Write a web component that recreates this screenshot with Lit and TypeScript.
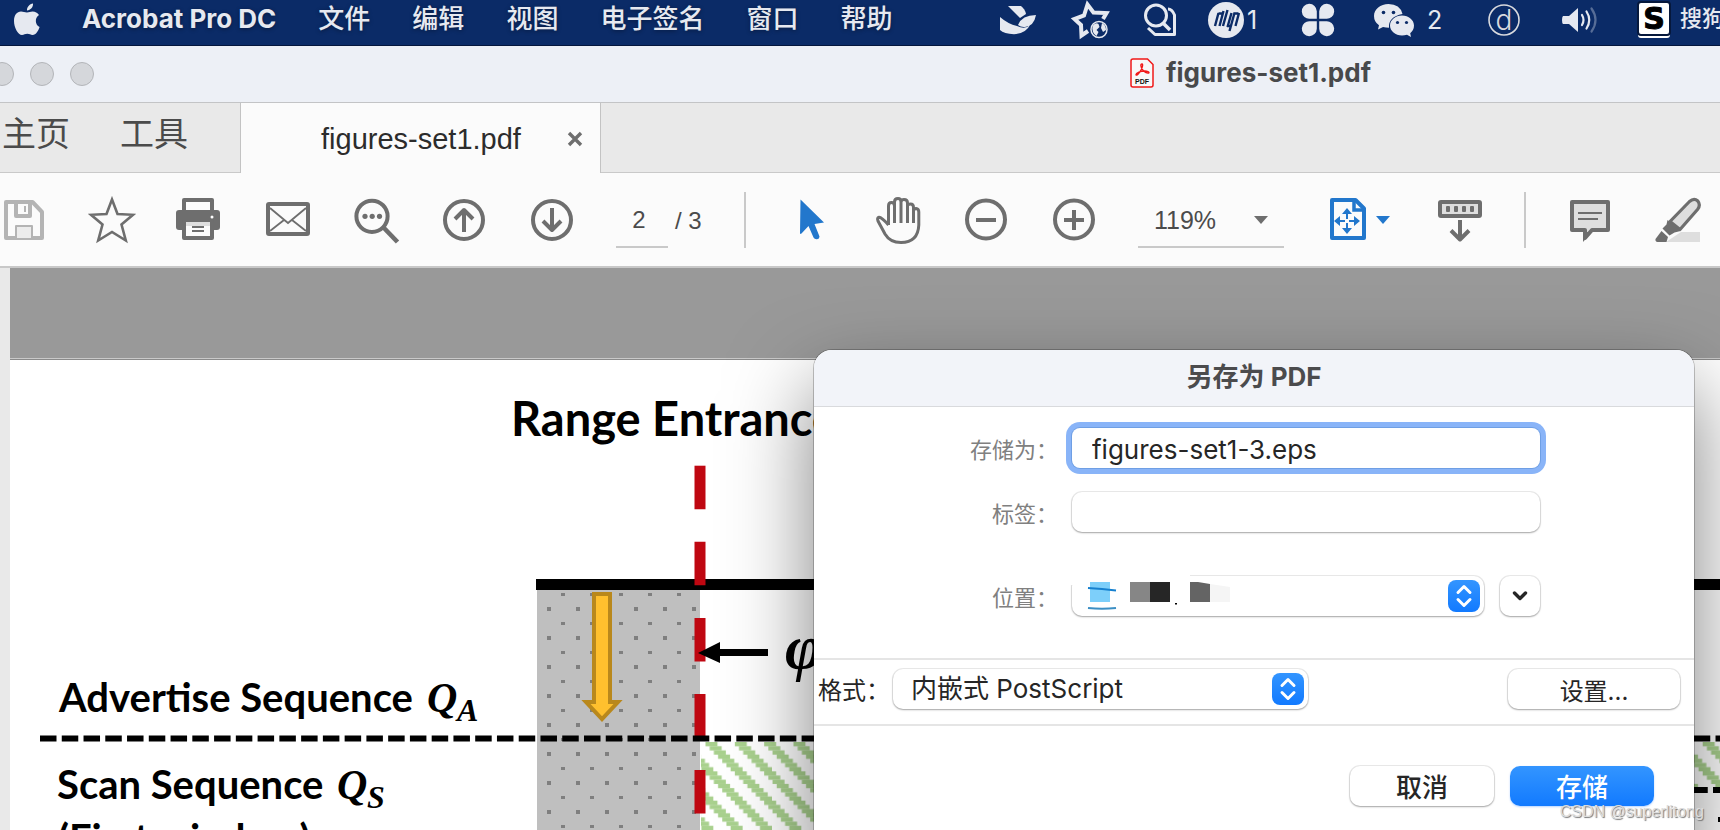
import { LitElement, html, svg, css } from "lit";
import { customElement, state } from "lit/decorators.js";

const toolIcons: Record<string, unknown> = {
  save: svg`<g fill="none" stroke="#b4b4b4" stroke-width="4" stroke-linejoin="round"><path d="M6 6h26.500l9.500 10v26H6z"/><path d="M16 6v14h14V6"/><path d="M16 42V30h16v12" fill="#ececec" stroke-width="2"/><path d="M25 10v6" stroke-width="2"/></g>`,
  star: svg`<path d="M24 3.500L29.500 18L45 18.800L33.500 28.500L37.800 44.500L24 36L10.200 44.500L14.500 28.500L3 18.800L18.500 18z" fill="none" stroke="#6e6e6e" stroke-width="2.600" stroke-linejoin="miter"/>`,
  print: svg`<path d="M8 15V4h28v11" fill="none" stroke="#6e6e6e" stroke-width="4" stroke-linejoin="round"/><path d="M3 14h38a3 3 0 0 1 3 3v14a3 3 0 0 1-3 3H3a3 3 0 0 1-3-3V17a3 3 0 0 1 3-3z" fill="#6e6e6e"/><path d="M8 26h28v16H8z" fill="#fbfbfb" stroke="#6e6e6e" stroke-width="4" stroke-linejoin="round"/><path d="M10 26h24v4H10z" fill="#dedede"/><path d="M16 31h12M16 35h12" stroke="#6e6e6e" stroke-width="2"/><circle cx="36" cy="21" r="1.500" fill="#fff"/>`,
  mail: svg`<rect x="4" y="8" width="40" height="30" rx="1" fill="none" stroke="#6e6e6e" stroke-width="4"/><path d="M6 12l18 15 18-15M6 35l14-11M42 35L28 24" fill="none" stroke="#6e6e6e" stroke-width="1.800"/>`,
  find: svg`<circle cx="20" cy="20.300" r="15.600" fill="none" stroke="#6e6e6e" stroke-width="4"/><path d="M32 32l13.500 14" stroke="#6e6e6e" stroke-width="4.600"/><g fill="#6e6e6e"><circle cx="13" cy="20.300" r="2.600"/><circle cx="20.200" cy="20.300" r="2.600"/><circle cx="27.500" cy="20.300" r="2.600"/></g>`,
  up: svg`<g fill="none" stroke="#6e6e6e" stroke-width="4"><circle cx="24" cy="24" r="19"/><path d="M24 36V15M15 23l9-9 9 9" stroke-linejoin="round"/></g>`,
  down: svg`<g fill="none" stroke="#6e6e6e" stroke-width="4"><circle cx="24" cy="24" r="19"/><path d="M24 12v21M15 25l9 9 9-9" stroke-linejoin="round"/></g>`,
  select: svg`<path d="M14.500 3.500L38 26.500L28.500 28L33.500 40.500Q33.500 43 31 43.300Q28.500 43.500 27.500 41.500L22.500 30L15.500 37.500Q14 38.500 14 37z" fill="#2277cc"/>`,
  hand: svg`<path d="M14.500 29V10Q14.500 6.500 17.500 6.500Q20.500 6.500 20.500 10M20.500 27V6Q20.500 2.500 24 2.500Q27 2.500 27 6V27M27 6Q27.500 3.500 30 3.500Q33.500 3.500 33.500 7V27M33.500 10Q34 8 36.500 8Q39.500 8 39.500 11.500V27M39.500 15Q40 12.500 42 12.500Q44.800 12.800 44.800 16V29Q44 46.500 27 46.500Q16 46.500 11 38L4 25Q2.800 21.800 5 21.300Q8 21.500 14.500 29" fill="none" stroke="#6e6e6e" stroke-width="3" stroke-linejoin="round"/>`,
  minus: svg`<g fill="none" stroke="#6e6e6e" stroke-width="4"><circle cx="24" cy="23.500" r="19"/><path d="M14 24h20"/></g>`,
  plus: svg`<g fill="none" stroke="#6e6e6e" stroke-width="4"><circle cx="24" cy="23.500" r="19"/><path d="M14 24h20M24 14v20"/></g>`,
  fit: svg`<path d="M8 4h23.500l8.500 8.500V42H8z" fill="none" stroke="#2277cc" stroke-width="4" stroke-linejoin="round"/><path d="M30 4v10h10" fill="none" stroke="#2277cc" stroke-width="3.500"/><g fill="#2277cc"><path d="M23 12l5 6H18zM23 38l5-6H18zM10 25l6-5v10zM36 25l-6-5v10z"/><path d="M22 17h2v6h-2zM22 27h2v6h-2zM15 24h6v2h-6zM25 24h6v2h-6z"/></g>`,
  scroll: svg`<rect x="4" y="6" width="40" height="14" rx="1" fill="#dedede" stroke="#6e6e6e" stroke-width="4"/><g fill="#6e6e6e"><rect x="10" y="10" width="4" height="6" rx="1"/><rect x="18" y="10" width="4" height="6" rx="1"/><rect x="26" y="10" width="4" height="6" rx="1"/><rect x="34" y="10" width="4" height="6" rx="1"/></g><path d="M24 24v19M15 34.500l9 9 9-9" fill="none" stroke="#6e6e6e" stroke-width="4" stroke-linejoin="round"/>`,
  comment: svg`<path d="M6 6h36v28H26l-7 8v-8H6z" fill="#dedede" stroke="#6e6e6e" stroke-width="4" stroke-linejoin="round"/><path d="M17 36v10l9-10z" fill="#6e6e6e"/><path d="M12 17h24M12 23h20" stroke="#6e6e6e" stroke-width="2"/>`,
  highlight: svg`<path d="M12 46L27 36h19v10z" fill="#dedede"/><path d="M16 25.500L35.500 5.500Q40 1.500 43.800 5Q47 9 43.500 13.500L26 33.500z" fill="#dedede" stroke="#6e6e6e" stroke-width="3.200" stroke-linejoin="round"/><path d="M13.500 24l13 11-6 1.500-5 3-7-7 4-4z" fill="#6e6e6e"/><path d="M7.500 35l6.500 6-1.500 5H3.500Q1 45.500 1.500 43z" fill="#6e6e6e"/>`,
};

const statusIcons: Record<string, unknown> = {
  bird: svg`<path d="M8 4h13q4 3 5 8l-6 4Q14 10 8 4z"/><path d="M18 23Q22 13 36 13Q34 24 25 25Q21 25.500 18 23z"/><path d="M0 15Q8 22 17 24q8 4 13-1Q26 31.500 14 32.200Q4 32 0 28z"/>`,
  star: svg`<path d="M31 17L34.500 11L21.500 10.500L15.500 2.500L12 13.500L2.500 17L9 23L9.500 33.500L16 29" fill="none" stroke="#e6e9f0" stroke-width="4" stroke-linejoin="miter"/><circle cx="27" cy="27.500" r="8" fill="none" stroke="#e6e9f0" stroke-width="1.500"/><path d="M20.500 24q3-4 6-2l1 3-3 3 2 2-2 4q-5-3-4-10zM30 21q4 2 4 7l-3 2-2-4z"/>`,
  search: svg`<g fill="none" stroke="#e6e9f0" stroke-width="3"><circle cx="12" cy="13.500" r="10.500"/><path d="M19 21l7 7" stroke-width="3.500"/><path d="M24 7q4 0 6.500 6v19.500H11L4 26" stroke-linejoin="round"/></g>`,
  hp: svg`<circle cx="18" cy="18" r="18"/><g stroke="#0b2b67" stroke-width="2.400" fill="none"><path d="M10.500 11L7 24M15.500 9L11.500 24M10.500 11.500h4M19.500 8l-4.500 16M23.500 11l-4 14M26.500 11l-5 18M31 11l-3.500 13M25.500 11.500h5M19 24h4"/></g>`,
  clover: svg`<path d="M14.800 16.800H8a7.500 7.500 0 1 1 6.800-7.500zM17.200 16.800H24a7.500 7.500 0 1 0-6.800-7.500zM14.800 19.200H8a7.500 7.500 0 1 0 6.800 7.500zM17.200 19.200H24a7.500 7.500 0 1 1-6.800 7.500z"/>`,
  wechat: svg`<path d="M14.500 2C6.500 2 0 7.300 0 14q0 6 5 9.300L4 27.500l5-2.500q3 .8 6 .8Q14 15 28.500 12Q26 2 14.500 2z"/><path d="M28 13.500c-6.600 0-12 4.500-12 10s5.400 10 12 10q2.500 0 5-.8l4 2.300-.8-3.700Q40 28 40 23.500c0-5.500-5.400-10-12-10z"/><g fill="#0b2b67"><circle cx="9.500" cy="10.500" r="1.800"/><circle cx="19.500" cy="10.500" r="1.800"/><circle cx="23.500" cy="20.500" r="1.600"/><circle cx="32.500" cy="20.500" r="1.600"/></g>`,
  disc: svg`<circle cx="16" cy="18" r="15" fill="none" stroke="#d9dade" stroke-width="1.600"/><text class="disc-letter" x="16" y="28" text-anchor="middle">d</text>`,
  volume: svg`<path d="M1 14h6l9-8v24l-9-8H1q-1-1-1-4t1-4z"/><g fill="none" stroke="#e6e9f0" stroke-width="2.200" stroke-linecap="round"><path d="M20 13q3 5 0 10"/><path d="M24.500 9.500q5.500 8.500 0 17"/><path d="M29.500 6.500q8 11.500 0 23" opacity=".35"/></g>`,
  sogou: svg`<rect x="0" y="2" width="32" height="34" rx="3" fill="#fff"/><rect x="0" y="0" width="32" height="33" rx="3" fill="#fff" stroke="#06183c" stroke-width="2"/><text class="sogou-letter" x="16" y="27" text-anchor="middle">S</text>`,
};

const statusItems = [
  { icon: "bird", w: 36 },
  { icon: "star", w: 36 },
  { icon: "search", w: 36 },
  { icon: "hp", w: 36, text: "1" },
  { icon: "clover", w: 32 },
  { icon: "wechat", w: 40, text: "2", wide: true },
  { icon: "disc", w: 32 },
  { icon: "volume", w: 36 },
  { icon: "sogou", w: 32 },
];

@customElement("tool-icon")
class ToolIcon extends LitElement {
  static properties = { name: {} };
  declare name: string;
  static styles = css`
    :host { display: block; }
    svg { display: block; width: 48px; height: 48px; }
  `;
  render() {
    return html`<svg viewBox="0 0 48 48" aria-hidden="true">${toolIcons[this.name]}</svg>`;
  }
}

@customElement("menu-bar")
class MenuBar extends LitElement {
  static styles = css`
    :host {
      display: flex; justify-content: space-between; align-items: flex-start; flex: none;
      box-sizing: border-box; height: 46px; overflow: hidden; padding-left: 14px;
      background: #0b2b67; border-bottom: 1px solid #04163d; color: #e6e9f0;
      font-family: Inter, "Noto Sans CJK SC", sans-serif; font-size: 25px;
    }
    nav { display: flex; align-items: center; gap: 42px; height: 38px; }
    a { color: inherit; text-decoration: none; white-space: nowrap; font-size: 26px; font-weight: 500; line-height: 38px; text-shadow: 0 1px 4px #0006; }
    a.app { font-weight: 700; }
    .apple { width: 26px; height: 34px; fill: #e6e9f0; display: block; }
    .status {
      display: grid; align-items: center; height: 40px; margin-right: -4px;
      grid-template-columns: 72px 72px 64px 94px 72px 114px 74px 76px 42px auto;
    }
    .item { display: flex; align-items: center; gap: 3px; }
    .item.wide { gap: 13px; }
    .item svg { display: block; height: 36px; fill: #e6e9f0; overflow: visible; }
    .ime { font-size: 22px; font-weight: 500; line-height: 32px; padding-bottom: 4px; }
    .disc-letter { font: 300 28px Inter, sans-serif; fill: #d9dade; }
    .sogou-letter { font: 700 30px "DejaVu Sans", sans-serif; fill: #000; stroke: #000; stroke-width: 1; }
  `;
  render() {
    const menus = ["文件", "编辑", "视图", "电子签名", "窗口", "帮助"];
    return html`
      <nav>
        <svg class="apple" viewBox="0 0 26 34"><path d="M13 10.500C10.500 10.500 9.500 9.500 7 9.500C3 9.500 0 13 0 19C0 25.500 4 33 8 33C10 33 11 31.800 13.300 31.800C15.600 31.800 16.500 33 18.600 33C22 33 24.500 28.500 25.600 25C21 23 20.500 15.500 25 13C23.500 10.800 21.300 9.500 18.600 9.500C16.300 9.500 15 10.500 13 10.500zM13 8.500C12.800 5 15.500 2 19 1.500C19.400 5 16.500 8.300 13 8.500z"/></svg>
        <a class="app" href="#app">Acrobat Pro DC</a>
        ${menus.map((m) => html`<a href="#menu">${m}</a>`)}
      </nav>
      <div class="status">
        ${statusItems.map((s) => html`<span class="item ${s.wide ? "wide" : ""}">
          <svg width=${s.w} height="36" viewBox="0 0 ${s.w} 36">${statusIcons[s.icon]}</svg>${s.text ?? ""}</span>`)}
        <span class="ime">搜狗</span>
      </div>`;
  }
}

@customElement("figure-page")
class FigurePage extends LitElement {
  static styles = css`
    :host { display: flex; flex: 1; min-height: 0; background: #fff; border-top: 1px solid #c9c9c9; overflow: hidden; }
    svg { display: block; flex: 1; width: 100%; border-top: 1px solid #8a8a8a; }
    .label { font: 700 40px Lato, sans-serif; }
    .heading { font: 700 47px Lato, sans-serif; }
    .math { font: italic 700 42px "Liberation Serif", serif; }
    .sub { font: italic 700 32px "Liberation Serif", serif; }
    .phi { font: italic 700 64px "Liberation Serif", serif; }
  `;
  render() {
    const steps = [0, 1, 2, 3, 4, 5, 6];
    const s = 29.33 / 7;
    return html`<svg role="img" aria-label="Sequence timing figure">
      <defs>
        <pattern id="dots" patternUnits="userSpaceOnUse" x="537" y="590" width="29" height="29">
          <rect width="29" height="29" fill="#bfbfbf"/>
          <rect x="24" y="3" width="4" height="3" fill="#7f7f7f"/>
          <rect x="10" y="17" width="4" height="4" fill="#7f7f7f"/>
        </pattern>
        <pattern id="hatch" patternUnits="userSpaceOnUse" x="705.500" y="742" width="29.330" height="29.330">
          ${steps.map((k) => svg`<rect x=${k * s} y=${k * s} width="12" height=${s + 0.1} fill="#a9d18e"/>
            <rect x=${k * s - 29.33} y=${k * s} width="12" height=${s + 0.1} fill="#a9d18e"/>`)}
        </pattern>
      </defs>
      <g transform="translate(-10 -360)">
        <rect x="537" y="590" width="163" height="400" fill="url(#dots)"/>
        <rect x="701" y="742" width="900" height="300" fill="url(#hatch)"/>
        <rect x="1600" y="742" width="900" height="48" fill="url(#hatch)"/>
        <path d="M536 584.500H2400" stroke="#000" stroke-width="11"/>
        <path d="M700 465.700V990" stroke="#bf0711" stroke-width="11" stroke-dasharray="43.500 32.600"/>
        <path d="M40 738.500H2400" stroke="#000" stroke-width="6" stroke-dasharray="16.500 5.260"/>
        <path d="M1625.960 790H2400" stroke="#000" stroke-width="6" stroke-dasharray="16.500 5.260"/>
        <path d="M594 594h16v108h8l-16 17-16-17h8z" fill="#ffc02e" stroke="#b9881c" stroke-width="4"/>
        <path d="M698 653l22-11v7h48v7h-48v7z" fill="#000"/>
        <rect x="1718" y="817" width="4" height="5"/>
        <text class="heading" x="511" y="436">Range Entrance</text>
        <text class="label" x="59" y="712">Advertise Sequence</text>
        <text class="math" x="427" y="712">Q</text>
        <text class="sub" x="457" y="721">A</text>
        <text class="label" x="57" y="799">Scan Sequence</text>
        <text class="math" x="337" y="799">Q</text>
        <text class="sub" x="367" y="808">S</text>
        <text class="label" x="58" y="853">(First window)</text>
        <text class="phi" x="785" y="668">φ</text>
      </g>
    </svg>`;
  }
}

@customElement("save-dialog")
class SaveDialog extends LitElement {
  @state() private fileName = "figures-set1-3.eps";
  static styles = css`
    :host {
      display: flex; flex-direction: column; overflow: hidden; background: #fff; color: #262626;
      border-radius: 18px; font-family: Inter, "Noto Sans CJK SC", sans-serif; font-size: 26px;
    }
    h2 {
      margin: 0; height: 56px; line-height: 54px; text-align: center; font-size: 26px; font-weight: 700;
      color: #4b4b4d; background: #f2f4f9; border-bottom: 1px solid #d9dadd;
    }
    .fields {
      display: grid; grid-template-columns: 244px minmax(0, 1fr); column-gap: 14px; row-gap: 24px;
      padding: 21px 154px 42px 0; align-items: start; border-bottom: 2px solid #e5e5e5;
    }
    .fields label { font-size: 22px; line-height: 36px; padding-top: 4px; color: #808080; text-align: right; }
    .fields .last { margin-top: 20px; }
    input, select, button {
      box-sizing: border-box; height: 40px; margin: 0; font: inherit; color: inherit; background: #fff;
      border: 0; border-radius: 10px; outline: 0; appearance: none;
      box-shadow: 0 0 0 1px #00000014, 0 1px 2px #0000004d;
    }
    input { width: 100%; padding: 2px 20px 0; }
    .name { border-radius: 8px; box-shadow: 0 0 0 1px #6f9fe4, 0 0 0 6px #89b4f8; }
    .place { display: flex; gap: 16px; height: 40px; }
    .popup { display: grid; flex: 1; align-items: center; }
    .popup > * { grid-area: 1 / 1; }
    .popup select { width: 100%; padding: 0 40px 0 18px; }
    .popup .step { justify-self: end; margin-right: 4px; }
    .popup svg { display: block; pointer-events: none; }
    .smudge { align-self: start; margin: -3px 0 0 -4px; }
    .more { width: 40px; padding: 0; display: grid; place-items: center; }
    .format { display: flex; align-items: center; padding: 9px 14px 15px 4px; border-bottom: 2px solid #e5e5e5; }
    .format label { font-size: 24px; line-height: 36px; padding-top: 4px; width: 75px; white-space: nowrap; }
    .format .popup { flex: 0 0 415px; }
    .format select { padding-bottom: 2px; }
    .settings { margin-left: auto; width: 172px; font-size: 24px; }
    .actions { display: flex; justify-content: flex-end; gap: 16px; padding: 40px 40px 60px; }
    .actions button { width: 144px; font-weight: 500; padding: 0 0 2px; }
    .actions .primary { color: #fff; background: linear-gradient(#3395ff, #127aff); box-shadow: 0 1px 2px #0a6cff4d; }
  `;
  private stepper() {
    return html`<svg class="step" width="32" height="32" viewBox="0 0 32 32" aria-hidden="true">
      <defs><linearGradient id="g" x2="0" y2="1"><stop stop-color="#3395ff"/><stop offset="1" stop-color="#127aff"/></linearGradient></defs>
      <rect width="32" height="32" rx="8" fill="url(#g)"/>
      <path d="M10 12.500l6-6 6 6M10 19.500l6 6 6-6" fill="none" stroke="#fff" stroke-width="3" stroke-linecap="round" stroke-linejoin="round"/></svg>`;
  }
  render() {
    return html`
      <h2>另存为 PDF</h2>
      <div class="fields">
        <label for="name">存储为：</label>
        <input id="name" class="name" .value=${this.fileName}
          @input=${(e: InputEvent) => (this.fileName = (e.target as HTMLInputElement).value)} />
        <label for="tags">标签：</label>
        <input id="tags" />
        <label class="last" for="where">位置：</label>
        <div class="place last">
          <div class="popup">
            <select id="where"><option></option></select>
            <svg class="smudge" width="170" height="42" viewBox="0 0 170 42" aria-hidden="true">
              <path d="M0 0h122v12H0z" fill="#fff"/>
              <path d="M22 9h20v20H22z" fill="#7dcffa"/><path d="M20 15l14 1 14 1.500" fill="none" stroke="#1580cf" stroke-width="2"/>
              <path d="M20 35q14 1.500 28 0" fill="none" stroke="#3c8fc4" stroke-width="2"/>
              <path d="M62 9h20v20H62z" fill="#868686"/><path d="M82 9h20v20H82z" fill="#262626"/>
              <path d="M107 30h2v1.500h-2z" fill="#000"/>
              <path d="M122 9h8l12 2v18h-20z" fill="#646464"/><path d="M142 11l20 3v15h-20z" fill="#f5f5f5"/>
            </svg>
            ${this.stepper()}
          </div>
          <button class="more" aria-label="展开">
            <svg width="16" height="12" viewBox="0 0 16 12"><path d="M2.500 3l5.500 5.500L13.500 3" fill="none" stroke="#262626" stroke-width="3.400" stroke-linecap="round" stroke-linejoin="round"/></svg>
          </button>
        </div>
      </div>
      <div class="format">
        <label for="format">格式：</label>
        <div class="popup">
          <select id="format"><option>内嵌式 PostScript</option></select>
          ${this.stepper()}
        </div>
        <button class="settings">设置...</button>
      </div>
      <div class="actions"><button>取消</button><button class="primary">存储</button></div>`;
  }
}

@customElement("app-root")
class AppRoot extends LitElement {
  static styles = css`
    :host {
      display: flex; flex-direction: column; position: relative; height: 100vh; overflow: hidden;
      background: #e9e9e9; color: #4b4b4b; font-family: Inter, "Noto Sans CJK SC", sans-serif;
    }
    .title { display: flex; align-items: center; flex: none; box-sizing: border-box; height: 57px; background: #edf0f6; border-bottom: 1px solid #c3c4c6; }
    .lights { display: flex; gap: 16px; margin-left: -10px; flex: 0 0 1140px; }
    .lights i { box-sizing: border-box; width: 24px; height: 24px; border-radius: 50%; background: #d5d7db; border: 1px solid #b3b5b9; }
    h1 { display: flex; align-items: center; gap: 12px; margin: 0; padding-bottom: 2px; font-size: 26px; line-height: 32px; font-weight: 700; color: #48494b; white-space: nowrap; }
    h1 svg { display: block; }
    .pdf-text { font: 700 7px "Liberation Sans", sans-serif; fill: #111; }
    .tabs { display: flex; flex: none; height: 70px; }
    .side { display: flex; align-items: center; gap: 50px; flex: 0 0 238px; padding: 0 0 8px 2px; box-sizing: content-box; border-bottom: 1px solid #c9c9c9; }
    .side a { font-size: 34px; line-height: 58px; color: #4b4b4b; text-decoration: none; white-space: nowrap; }
    .tab {
      display: flex; align-items: center; justify-content: space-between; flex: none; box-sizing: border-box; width: 361px;
      padding: 2px 17px 0 80px; background: #fbfbfb; border: 1px solid #c3c3c3; border-width: 0 1px;
      font-family: "Liberation Sans", sans-serif; font-size: 29px; color: #2c2c2c;
    }
    .rest { flex: 1; border-bottom: 1px solid #c9c9c9; }
    .close { border: 0; padding: 0; background: none; }
    .close svg { display: block; }
    .tools { display: flex; align-items: center; gap: 40px; flex: none; height: 93px; background: #fbfbfb; border-bottom: 2px solid #c8c8c8; font-family: "Liberation Sans", sans-serif; font-size: 24px; }
    .tools button { flex: none; border: 0; padding: 0; background: none; display: flex; align-items: center; gap: 4px; }
    .divider { flex: none; width: 2px; height: 56px; background: #c9c9c9; }
    .pages { display: flex; align-items: center; gap: 7px; flex: 0 0 88px; white-space: nowrap; }
    .pages span { padding-top: 2px; }
    .pages input, .zoom select {
      box-sizing: border-box; height: 56px; margin: 0; border: 0; border-bottom: 2px solid #c9c9c9; border-radius: 0;
      background: none; font: inherit; color: inherit; outline: 0; appearance: none;
    }
    .pages input { width: 52px; padding: 2px 6px 0 0; text-align: center; }
    .zoom { display: grid; align-items: center; flex: 0 0 146px; font-size: 25px; }
    .zoom > * { grid-area: 1 / 1; }
    .zoom select { width: 100%; padding: 2px 30px 0 16px; }
    .zoom svg { justify-self: end; margin-right: 16px; pointer-events: none; }
    .fit { width: 72px; }
    .doc { display: flex; flex-direction: column; flex: 1; min-height: 0; margin-left: 10px; padding-top: 90px; background: #999; }
    save-dialog {
      position: absolute; z-index: 1; left: 814px; right: 26px; top: 350px;
      box-shadow: 0 0 0 1px #00000038, 0 36px 84px #00000080;
    }
    .mark { position: absolute; z-index: 2; right: 16px; bottom: 8px; font-family: "Liberation Sans", sans-serif; font-size: 16px; line-height: 20px; color: #dcdcdc; text-shadow: 1px 1px 1px #777; }
  `;
  private tool(name: string, label: string) {
    return html`<button aria-label=${label}><tool-icon .name=${name}></tool-icon></button>`;
  }
  render() {
    const first = [["save", "保存"], ["star", "收藏"], ["print", "打印"], ["mail", "邮件"], ["find", "查找"], ["up", "上一页"], ["down", "下一页"]];
    const second = [["select", "选择"], ["hand", "手形"], ["minus", "缩小"], ["plus", "放大"]];
    return html`
      <menu-bar></menu-bar>
      <header class="title">
        <div class="lights"><i></i><i></i><i></i></div>
        <h1>
          <svg width="24" height="30" viewBox="0 0 24 30" aria-hidden="true">
            <path d="M3 1h14.500L23 6.500V27a2 2 0 0 1-2 2H3a2 2 0 0 1-2-2V3a2 2 0 0 1 2-2z" fill="#f8f8f8" stroke="#f01818" stroke-width="1.500"/>
            <path d="M12 6C10 6 11 9.500 12.500 11.500C14 14 17 15.500 18.700 15C20 14 17 12.800 14 13C11 13 6 15 6 16.500C6.500 18.500 9 15.500 11 12C12.300 9.500 13.300 6 12 6z" fill="none" stroke="#f01818" stroke-width="1.400"/>
            <text class="pdf-text" x="12" y="25.500" text-anchor="middle">PDF</text>
          </svg>
          figures-set1.pdf
        </h1>
      </header>
      <nav class="tabs">
        <div class="side"><a href="#home">主页</a><a href="#tools">工具</a></div>
        <div class="tab">figures-set1.pdf
          <button class="close" aria-label="关闭"><svg width="16" height="16" viewBox="0 0 16 16"><path d="M2 2l12 12M14 2L2 14" stroke="#6e6e6e" stroke-width="3.400"/></svg></button>
        </div>
        <div class="rest"></div>
      </nav>
      <div class="tools">
        ${first.map(([n, l]) => this.tool(n, l))}
        <div class="pages"><input aria-label="页码" value="2" /><span>/ 3</span></div>
        <span class="divider"></span>
        ${second.map(([n, l]) => this.tool(n, l))}
        <div class="zoom">
          <select aria-label="缩放"><option>119%</option></select>
          <svg width="14" height="8" viewBox="0 0 14 8"><path d="M0 0h14L7 8z" fill="#6e6e6e"/></svg>
        </div>
        <button class="fit" aria-label="适合页面"><tool-icon .name=${"fit"}></tool-icon>
          <svg width="14" height="8" viewBox="0 0 14 8"><path d="M0 0h14L7 8z" fill="#2277cc"/></svg></button>
        ${this.tool("scroll", "滚动")}
        <span class="divider"></span>
        ${this.tool("comment", "注释")}
        ${this.tool("highlight", "高亮")}
      </div>
      <main class="doc"><figure-page></figure-page></main>
      <save-dialog role="dialog"></save-dialog>
      <span class="mark">CSDN @superlitong</span>`;
  }
}
